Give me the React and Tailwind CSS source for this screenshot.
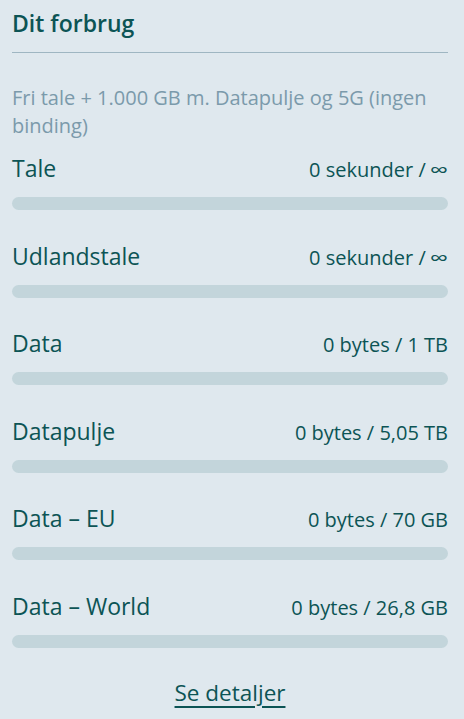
const rows = [
  { label: 'Tale', value: '0 sekunder / ', inf: true },
  { label: 'Udlandstale', value: '0 sekunder / ', inf: true },
  { label: 'Data', value: '0 bytes / 1 TB' },
  { label: 'Datapulje', value: '0 bytes / 5,05 TB' },
  { label: 'Data – EU', value: '0 bytes / 70 GB' },
  { label: 'Data – World', value: '0 bytes / 26,8 GB' },
]

function UsageRow({ label, value, inf }) {
  return (
    <div className="h-[87.6px] pt-[1px]">
      <div className="flex items-baseline justify-between h-[44px]">
        <span className="text-[23px] leading-[30px]">{label}</span>
        <span className="text-[20px] leading-[30px] whitespace-pre">
          {value}
          {inf && (
            <span className="inline-block ml-[3px] origin-right scale-x-[1.3]">∞</span>
          )}
        </span>
      </div>
      <div className="h-[13px] rounded-full bg-[#c3d5db]" />
    </div>
  )
}

export default function App() {
  return (
    <div
      className="min-h-screen w-full bg-[#dfe8ee] text-[#0c5455] pl-3 pr-4"
      style={{ fontFamily: '"Open Sans", sans-serif' }}
    >
      {/* header */}
      <div className="pt-[8px] pb-[14px] border-b border-[#9fb6c2]">
        <h2 className="text-[23px] font-semibold leading-[30px]">Dit forbrug</h2>
      </div>

      <p className="mt-[31px] text-[20px] leading-[28px] text-[#7b9aab]">
        Fri tale + 1.000 GB m. Datapulje og 5G (ingen binding)
      </p>

      <div className="mt-[12px]">
        {rows.map((r) => (
          <UsageRow key={r.label} {...r} />
        ))}
      </div>

      <div className="text-center">
        <a href="#" className="text-[22.5px] leading-[30px] underline underline-offset-[5px] decoration-[1.5px]">
          Se detaljer
        </a>
      </div>
    </div>
  )
}
